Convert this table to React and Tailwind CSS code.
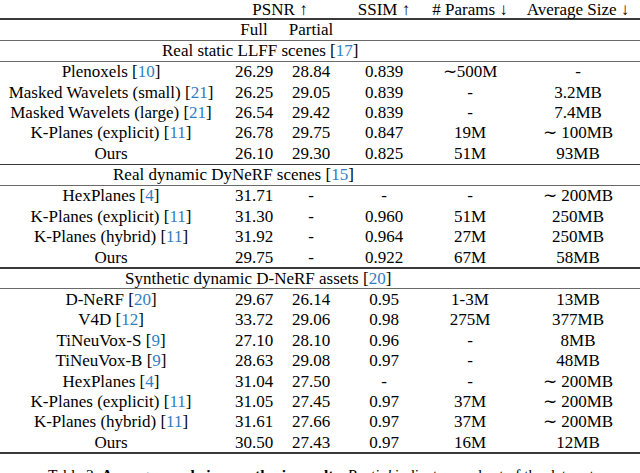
const cols = "grid grid-cols-[222px_64px_50px_96px_76px_132px] items-center"

const Cite = ({ n }) => (
  <span>
    [<span className="text-[#2f7ec2]">{n}</span>]
  </span>
)

const sections = [
  {
    title: "Real static LLFF scenes",
    cite: 17,
    pad: "pl-[162px]",
    rows: [
      ["Plenoxels", 10, "26.29", "28.84", "0.839", "∼500M", "-"],
      ["Masked Wavelets (small)", 21, "26.25", "29.05", "0.839", "-", "3.2MB"],
      ["Masked Wavelets (large)", 21, "26.54", "29.42", "0.839", "-", "7.4MB"],
      ["K-Planes (explicit)", 11, "26.78", "29.75", "0.847", "19M", "∼ 100MB"],
      ["Ours", null, "26.10", "29.30", "0.825", "51M", "93MB"],
    ],
  },
  {
    title: "Real dynamic DyNeRF scenes",
    cite: 15,
    pad: "pl-[113px]",
    rows: [
      ["HexPlanes", 4, "31.71", "-", "-", "-", "∼ 200MB"],
      ["K-Planes (explicit)", 11, "31.30", "-", "0.960", "51M", "250MB"],
      ["K-Planes (hybrid)", 11, "31.92", "-", "0.964", "27M", "250MB"],
      ["Ours", null, "29.75", "-", "0.922", "67M", "58MB"],
    ],
  },
  {
    title: "Synthetic dynamic D-NeRF assets",
    cite: 20,
    pad: "pl-[125px]",
    rows: [
      ["D-NeRF", 20, "29.67", "26.14", "0.95", "1-3M", "13MB"],
      ["V4D", 12, "33.72", "29.06", "0.98", "275M", "377MB"],
      ["TiNeuVox-S", 9, "27.10", "28.10", "0.96", "-", "8MB"],
      ["TiNeuVox-B", 9, "28.63", "29.08", "0.97", "-", "48MB"],
      ["HexPlanes", 4, "31.04", "27.50", "-", "-", "∼ 200MB"],
      ["K-Planes (explicit)", 11, "31.05", "27.45", "0.97", "37M", "∼ 200MB"],
      ["K-Planes (hybrid)", 11, "31.61", "27.66", "0.97", "37M", "∼ 200MB"],
      ["Ours", null, "30.50", "27.43", "0.97", "16M", "12MB"],
    ],
  },
]

const Thick = () => <div className="h-[1.6px] bg-[#3a3a3a]" />
const Thin = () => <div className="h-px bg-[#6a6a6a]" />

export default function App() {
  return (
    <div className="w-[640px] h-[473px] overflow-hidden bg-white text-black text-[17px] leading-none font-['Liberation_Serif',serif]">
      <div className={`${cols} h-[18px] whitespace-nowrap`}>
        <div />
        <div className="col-span-2 text-center pl-[2px]">PSNR ↑</div>
        <div className="text-center">SSIM ↑</div>
        <div className="text-center">#&nbsp;Params&nbsp;↓</div>
        <div className="text-center pl-[8px]">Average Size ↓</div>
      </div>
      <Thick />
      <div className={`${cols} h-[20px]`}>
        <div />
        <div className="text-center">Full</div>
        <div className="text-center">Partial</div>
      </div>
      {sections.map((s, i) => (
        <div key={s.title}>
          {i === 0 && <Thin />}
          <div className={`${i === 0 ? "h-[20px]" : "h-[19.5px]"} flex items-center ${s.pad}`}>
            {s.title}&nbsp;<Cite n={s.cite} />
          </div>
          <Thin />
          {s.rows.map(r => (
            <div key={r[0] + r[2]} className={`${cols} h-[20.4px] whitespace-nowrap`}>
              <div className="text-center">
                {r[0]}
                {r[1] && (
                  <>
                    {" "}
                    <Cite n={r[1]} />
                  </>
                )}
              </div>
              <div className="text-center">{r[2]}</div>
              <div className="text-center">{r[3]}</div>
              <div className="text-center">{r[4]}</div>
              <div className="text-center">{r[5]}</div>
              <div className="text-center pl-[8px]">{r[6]}</div>
            </div>
          ))}
          <Thick />
        </div>
      ))}
      <div className="pt-[13px] pl-[48px] text-[15.5px] whitespace-nowrap">
        Table 2. <span className="font-bold">Average novel view synthesis results.</span>{" "}
        <span className="italic">Partial</span> indicates a subset of the data set.
      </div>
    </div>
  )
}
